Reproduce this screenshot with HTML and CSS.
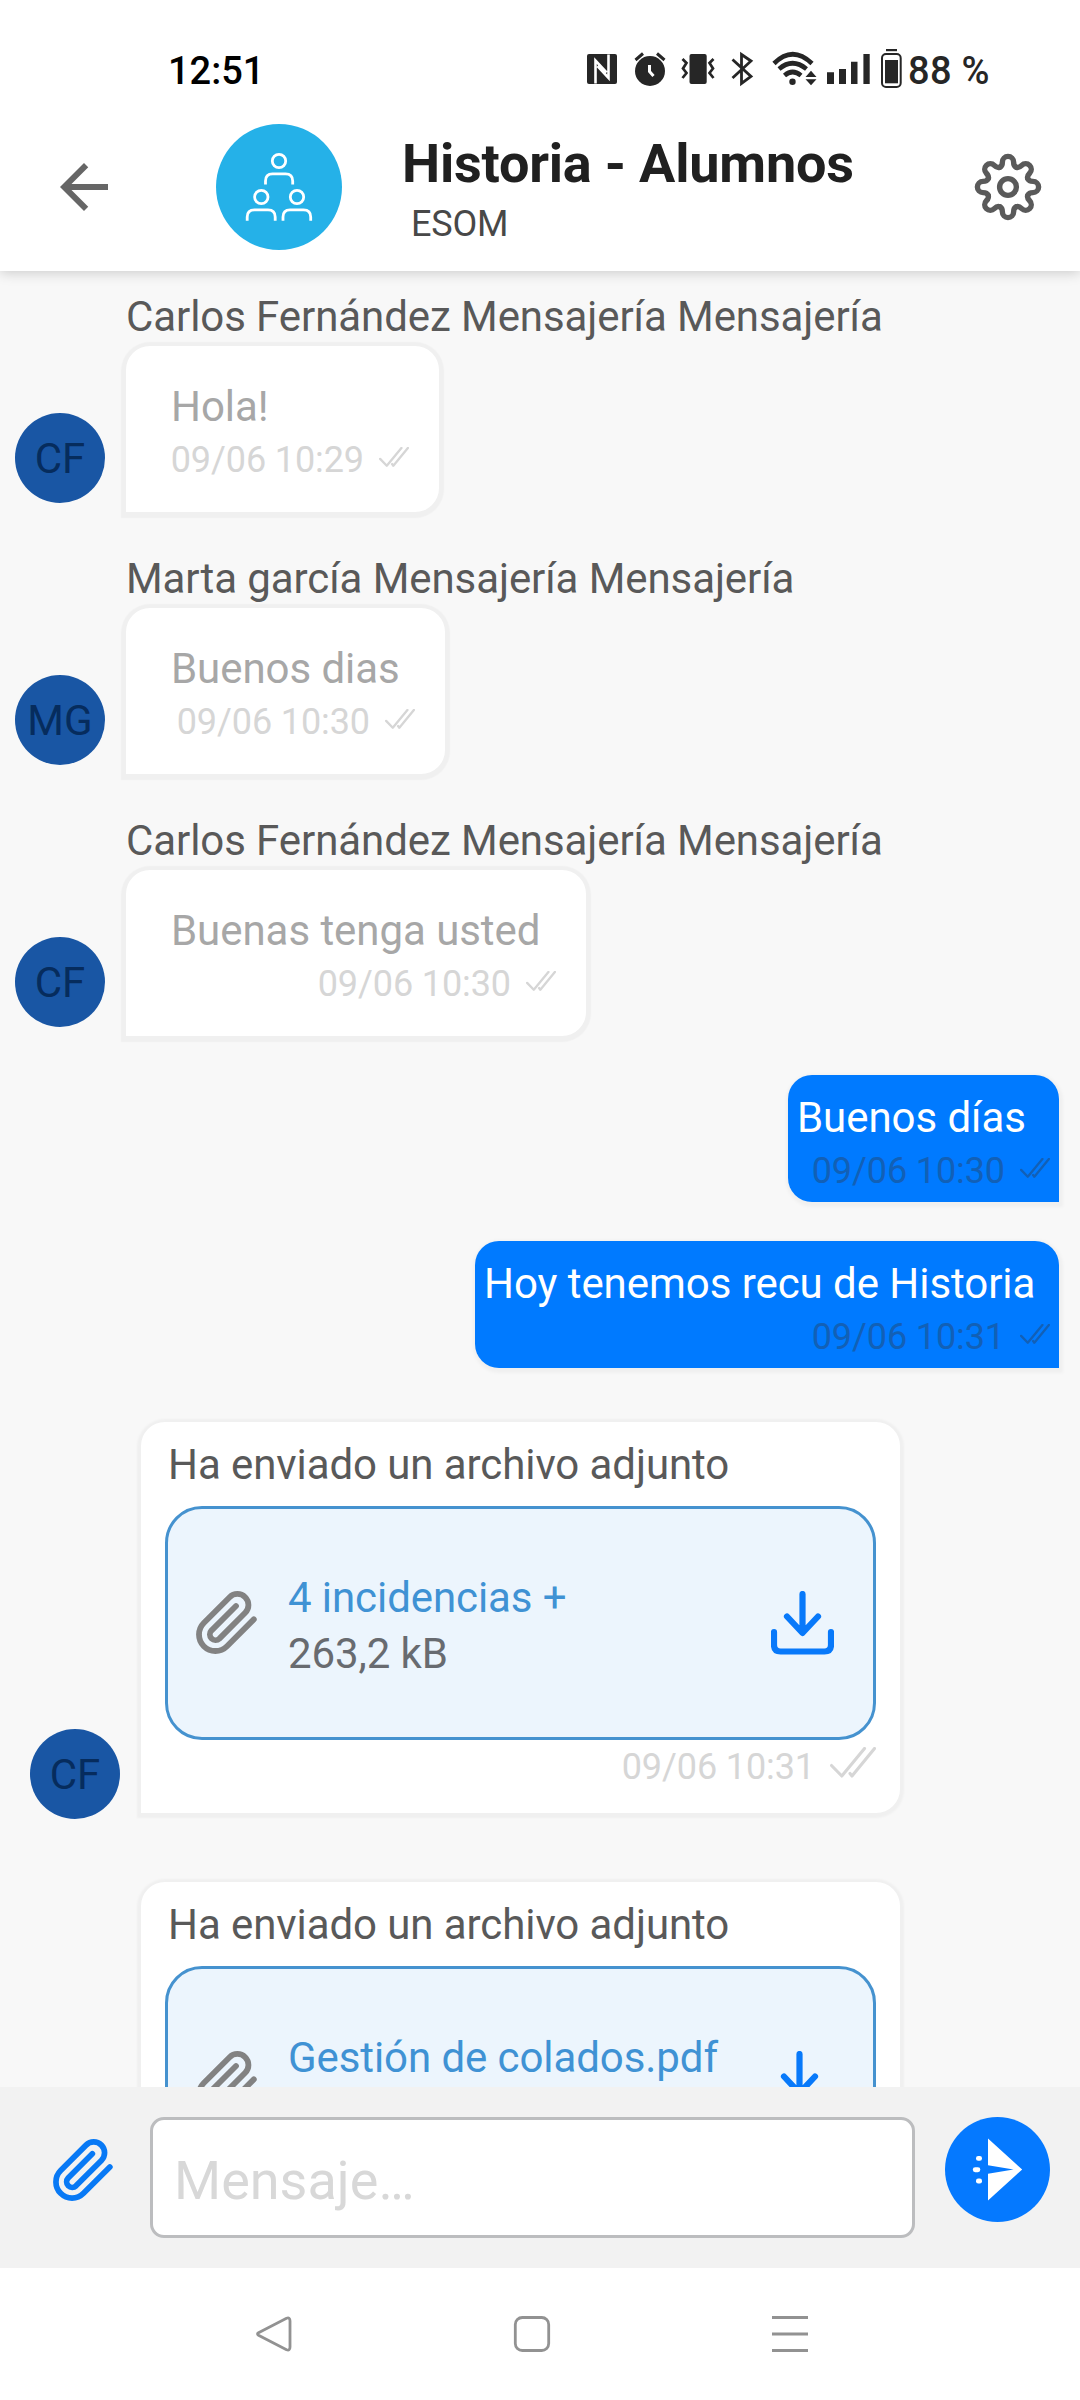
FILE: index.html
```html
<!DOCTYPE html>
<html lang="es">
<head>
<meta charset="utf-8">
<title>Historia - Alumnos</title>
<link rel="stylesheet" href="styles.css">
</head>
<body>
<svg class="sprite" width="0" height="0" aria-hidden="true">
  <symbol id="clip" viewBox="0 0 61 63"><path d="M57.8 28.4 31 55.2A16.4 16.4 0 0 1 7.8 32L33.6 6.2A11 11 0 0 1 49.2 21.8L23.4 47.6A5.66 5.66 0 0 1 15.4 39.6L40 15" fill="none" stroke="currentColor" stroke-width="5.8" stroke-linecap="round" stroke-linejoin="round"/></symbol>
  <symbol id="checks" viewBox="0 0 46 31"><path d="M1.5 18.5 11.8 29 34.5 1.5M20 26.5 22 29 44.5 1.5" fill="none" stroke="currentColor" stroke-linecap="round" stroke-linejoin="round"/></symbol>
  <symbol id="download" viewBox="0 0 63 64"><path d="M31.5 3V41M16 25.500 31.5 42 47 25.500M3 41V54Q3 60.500 9.500 60.500H53.500Q60 60.500 60 54V41" fill="none" stroke="currentColor" stroke-width="6.200" stroke-linecap="round" stroke-linejoin="round"/></symbol>
  <symbol id="tooth" viewBox="-36 -36 72 72"><path d="M-8.200-19.800C-5.600-20.900-5.600-23-5.600-25A5.600 5.600 0 0 1 5.600-25C5.600-23 5.600-20.900 8.200-19.800" fill="none" stroke="currentColor" stroke-width="5.400" stroke-linecap="round"/></symbol>
</svg>
<div class="screen">
  <header class="top">
    <div class="status">
      <span class="clock">12:51</span>
      <svg class="status-icons" width="320" height="42" viewBox="584 48 320 42" fill="#262626" stroke="none">
        <rect x="587" y="54" width="30" height="30" rx="2"/>
        <path d="M595.500 83.500V60.500L606.500 72.500M608.500 54.500V78L597.500 66" fill="none" stroke="#fff" stroke-width="2.600"/>
        <circle cx="650" cy="71" r="15"/>
        <path d="M635.500 60 643 53.500M664.500 60 657 53.500" stroke="#262626" stroke-width="3"/>
        <path d="M649.500 65V71.500L653.500 76" fill="none" stroke="#fff" stroke-width="3"/>
        <rect x="689.500" y="54" width="17.200" height="30" rx="2"/>
        <path d="M682.500 59 686.500 63 683 68.500 686.500 73 682.500 78M713.500 59 709.500 63 713 68.500 709.500 73 713.500 78" fill="none" stroke="#262626" stroke-width="2.700"/>
        <path d="M732.500 59.500 751 76.500 741.500 83.500V54.500L751 61 732.500 78" fill="none" stroke="#262626" stroke-width="2.800"/>
        <path d="M774 63.500Q792.500 45 812 63.500M779 69Q792.500 57.500 806.500 69M784.500 75.500Q792.500 68.500 801 75.500" fill="none" stroke="#262626" stroke-width="4.600"/>
        <circle cx="792.500" cy="81.700" r="3.200"/>
        <path d="M805.500 77 811 70.700 816.500 77ZM805.500 79.200H816.500L811 85.300Z"/>
        <path d="M827 72.300h7V84h-7zM839 69h7V84h-7zM851 61.700h6.500V84h-6.500zM863.400 54h6.300V84h-6.300z"/>
        <rect x="886" y="49" width="11" height="2.200"/>
        <rect x="882" y="54" width="18.700" height="33" rx="4" fill="none" stroke="#262626" stroke-width="2"/>
        <rect x="885" y="60" width="13" height="23.300"/>
      </svg>
      <span class="level">88 %</span>
    </div>
    <div class="bar">
      <svg class="back" width="72" height="72" viewBox="0 0 24 24"><path d="M20 11H7.830l5.590-5.590L12 4l-8 8 8 8 1.410-1.410L7.830 13H20v-2z" fill="#666"/></svg>
      <svg class="group" width="126" height="126" viewBox="216 124 126 126" fill="none" stroke="#fff" stroke-width="2.800">
        <circle cx="279" cy="187" r="63" fill="#25b1e8" stroke="none"/>
        <circle cx="279" cy="161" r="6.700"/>
        <circle cx="261.300" cy="197" r="6.700"/>
        <circle cx="297" cy="197" r="6.700"/>
        <path d="M265.500 184.500V181Q265.500 173.800 272.500 173.800H285.500Q292.700 173.800 292.700 181V184.500M247.200 220.700V217Q247.200 209.800 254.500 209.800H268Q275.200 209.800 275.200 217V220.700M283 220.700V217Q283 209.800 290 209.800H303.500Q310.700 209.800 310.700 217V220.700"/>
      </svg>
      <div class="heading">
        <h1>Historia - Alumnos</h1>
        <p>ESOM</p>
      </div>
      <svg class="gear" width="72" height="72" viewBox="-36 -36 72 72" color="#5a5a5a">
        <g id="quarter"><use href="#tooth" x="-36" y="-36" width="72" height="72"/><g transform="rotate(45)"><use href="#tooth" x="-36" y="-36" width="72" height="72"/></g></g>
        <use href="#quarter" transform="rotate(90)"/><use href="#quarter" transform="rotate(180)"/><use href="#quarter" transform="rotate(270)"/>
        <circle r="8.400" fill="none" stroke="currentColor" stroke-width="5.400"/>
      </svg>
    </div>
  </header>

  <main class="chat">
    <section class="msg">
      <div class="name">Carlos Fernández Mensajería Mensajería</div>
      <div class="row"><div class="avatar">CF</div>
        <div class="bubble w1"><div class="text">Hola!</div><div class="meta">09/06 10:29<svg class="tick"><use href="#checks"/></svg></div></div></div>
    </section>
    <section class="msg">
      <div class="name">Marta garcía Mensajería Mensajería</div>
      <div class="row"><div class="avatar">MG</div>
        <div class="bubble w2"><div class="text">Buenos dias</div><div class="meta">09/06 10:30<svg class="tick"><use href="#checks"/></svg></div></div></div>
    </section>
    <section class="msg">
      <div class="name">Carlos Fernández Mensajería Mensajería</div>
      <div class="row"><div class="avatar">CF</div>
        <div class="bubble w3"><div class="text">Buenas tenga usted</div><div class="meta">09/06 10:30<svg class="tick"><use href="#checks"/></svg></div></div></div>
    </section>
    <div class="bubble own w4"><div class="text">Buenos días</div><div class="meta">09/06 10:30<svg class="tick"><use href="#checks"/></svg></div></div>
    <div class="bubble own w5"><div class="text">Hoy tenemos recu de Historia</div><div class="meta">09/06 10:31<svg class="tick"><use href="#checks"/></svg></div></div>
    <section class="row file-row">
      <div class="avatar">CF</div>
      <div class="card">
        <div class="caption">Ha enviado un archivo adjunto</div>
        <div class="file">
          <svg class="clip"><use href="#clip"/></svg>
          <div class="info"><div class="file-name">4 incidencias +</div><div class="size">263,2 kB</div></div>
          <svg class="download"><use href="#download"/></svg>
        </div>
        <div class="meta">09/06 10:31<svg class="tick"><use href="#checks"/></svg></div>
      </div>
    </section>
    <section class="row file-row second">
      <div class="card">
        <div class="caption">Ha enviado un archivo adjunto</div>
        <div class="file">
          <svg class="clip"><use href="#clip"/></svg>
          <div class="info"><div class="file-name">Gestión de colados.pdf</div></div>
          <svg class="download"><use href="#download"/></svg>
        </div>
      </div>
    </section>
  </main>

  <footer class="composer">
    <svg class="attach"><use href="#clip"/></svg>
    <div class="field">Mensaje…</div>
    <svg class="send" width="105" height="105" viewBox="0 0 105 105" fill="#fff">
      <circle cx="52.500" cy="52.500" r="52.500" fill="#0579ff"/>
      <path d="M43 21.500 77.200 52.500 43 83.500V56.800L68.500 52.500 43 48.300Z"/>
      <rect x="31" y="39" width="6" height="4.800" rx="2.200"/>
      <rect x="27.800" y="50.200" width="7.500" height="5" rx="2.400"/>
      <rect x="31" y="61.600" width="6" height="4.800" rx="2.200"/>
    </svg>
  </footer>
  <nav class="nav">
    <svg width="40" height="40" viewBox="-20 -20 40 40"><path d="M-15.500-1.200 12.500-15.700Q16-17 16-13V13Q16 17 12.500 15.700L-15.500 1.200Q-17.500 0-15.500-1.200Z"/></svg>
    <svg width="40" height="40" viewBox="-20 -20 40 40"><rect x="-16.700" y="-16.500" width="33.400" height="33" rx="7"/></svg>
    <svg width="40" height="40" viewBox="-20 -20 40 40"><path d="M-18-16.500H18M-18 0H18M-18 16.500H18"/></svg>
  </nav>
</div>
</body>
</html>
```
FILE: styles.css
```css
* { box-sizing: border-box; }
body { margin: 0; font-family: Roboto, sans-serif; background: #fff; }
svg { display: block; flex: none; }
h1, p { margin: 0; }
.sprite { position: absolute; }
.screen { width: 1080px; height: 2400px; display: flex; flex-direction: column; overflow: hidden; }

/* Header */
.top { height: 271px; flex: none; background: #fff; box-shadow: 0 2px 12px rgba(0, 0, 0, .18); z-index: 1; }
.status { display: flex; height: 124px; padding: 48px 0 0 168px; }
.clock, .level { font-size: 38px; line-height: 46px; font-weight: 500; color: #000; }
.clock { width: 416px; }
.level { margin-left: 4px; color: #262626; white-space: nowrap; letter-spacing: .3px; }
.bar { display: flex; height: 147px; }
.back { margin: 27px 96px 0 48px; }
.heading { margin-left: 60px; width: 570px; white-space: nowrap; }
.heading h1 { font-size: 54px; line-height: 64px; margin-top: 8px; font-weight: 700; letter-spacing: -.2px; color: #202020; }
.heading p { font-size: 36px; line-height: 42px; margin: 7px 0 0 9px; letter-spacing: -.2px; color: #484848; }
.gear { margin-top: 27px; }

/* Conversation */
.chat { height: 1816px; flex: none; overflow: hidden; background: #f8f8f8; padding-top: 21px; display: flex; flex-direction: column; }
.msg { margin-bottom: 42px; }
.name { margin: 0 0 4px 126px; font-size: 42px; line-height: 50px; letter-spacing: -.08px; color: #595959; white-space: nowrap; }
.row { display: flex; align-items: flex-end; }
.avatar { width: 90px; height: 90px; margin: 0 21px 9px 15px; border-radius: 50%; background: #1956a4; color: #062c5d; font-size: 42px; line-height: 92px; text-align: center; flex: none; }
.bubble { height: 166px; padding: 36px 30px 0 45px; background: #fff; border-radius: 24px 24px 24px 0; box-shadow: 0 1px 1px 5px #f0f0f0; white-space: nowrap; }
.text { font-size: 42px; line-height: 50px; letter-spacing: -.05px; color: #a7a7a7; }
.meta { display: flex; justify-content: flex-end; gap: 15px; margin-top: 7px; font-size: 36px; line-height: 42px; letter-spacing: -.1px; color: #d6d6d6; }
.tick { width: 30px; height: 20px; margin-top: 8px; stroke-width: 3.6; }
.w1 { width: 313px; }
.w2 { width: 319px; }
.w3 { width: 460px; }
.w4 { width: 271px; }
.w5 { width: 584px; }
.own { align-self: flex-end; flex: none; height: 127px; margin: 0 21px 39px 0; padding: 18px 9px 0 9px; background: #007aff; border-radius: 24px 24px 0 24px; box-shadow: 1px 2px 3px 3px #f0f0f0; }
.w4 { margin-top: -3px; }
.own .text { color: #fff; }
.own .meta { color: #1260b6; }

/* Attachments */
.file-row { margin-top: 15px; flex: none; }
.file-row .avatar { margin: 0 21px -6px 30px; }
.card { width: 759px; height: 391px; padding: 18px 24px 0; background: #fff; border-radius: 24px 24px 24px 0; box-shadow: 0 1px 2px 4px #f0f0f0; flex: none; }
.caption { margin: 0 0 16px 3px; font-size: 42px; line-height: 50px; letter-spacing: -.08px; color: #595959; white-space: nowrap; }
.file { display: flex; height: 234px; padding: 82px 39px 0 28px; border: 3px solid #4592cf; border-radius: 37px; background: #ecf5fd; }
.clip { width: 61px; height: 63px; color: #828282; }
.info { flex: 1; margin: -21px 0 0 31px; font-size: 42px; line-height: 56px; letter-spacing: -.08px; white-space: nowrap; }
.file-name { color: #3f92d4; }
.size { color: #686b70; }
.download { width: 63px; height: 64px; color: #0879fa; }
.card .meta { margin-top: 6px; }
.card .tick { width: 46px; height: 31px; margin-top: 1px; stroke-width: 3.1; }
.second { margin-top: 69px; padding-left: 141px; }
.second .file { padding-right: 42px; }

/* Composer and navigation */
.composer { height: 181px; flex: none; display: flex; background: #f2f2f2; padding: 30px 30px 0 53px; }
.attach { width: 60px; height: 62px; margin-top: 22px; color: #0879f5; }
.field { width: 765px; height: 121px; margin: 0 30px 0 37px; padding: 0 21px; border: 3px solid #bcbdbf; border-radius: 14px; background: #fff; color: #d8d8d8; font-size: 54px; line-height: 122px; }
.nav { height: 132px; flex: none; display: flex; gap: 218px; padding: 46px 0 0 254px; background: #fff; }
.nav svg { fill: none; stroke: #929292; stroke-width: 2.8; }
```
